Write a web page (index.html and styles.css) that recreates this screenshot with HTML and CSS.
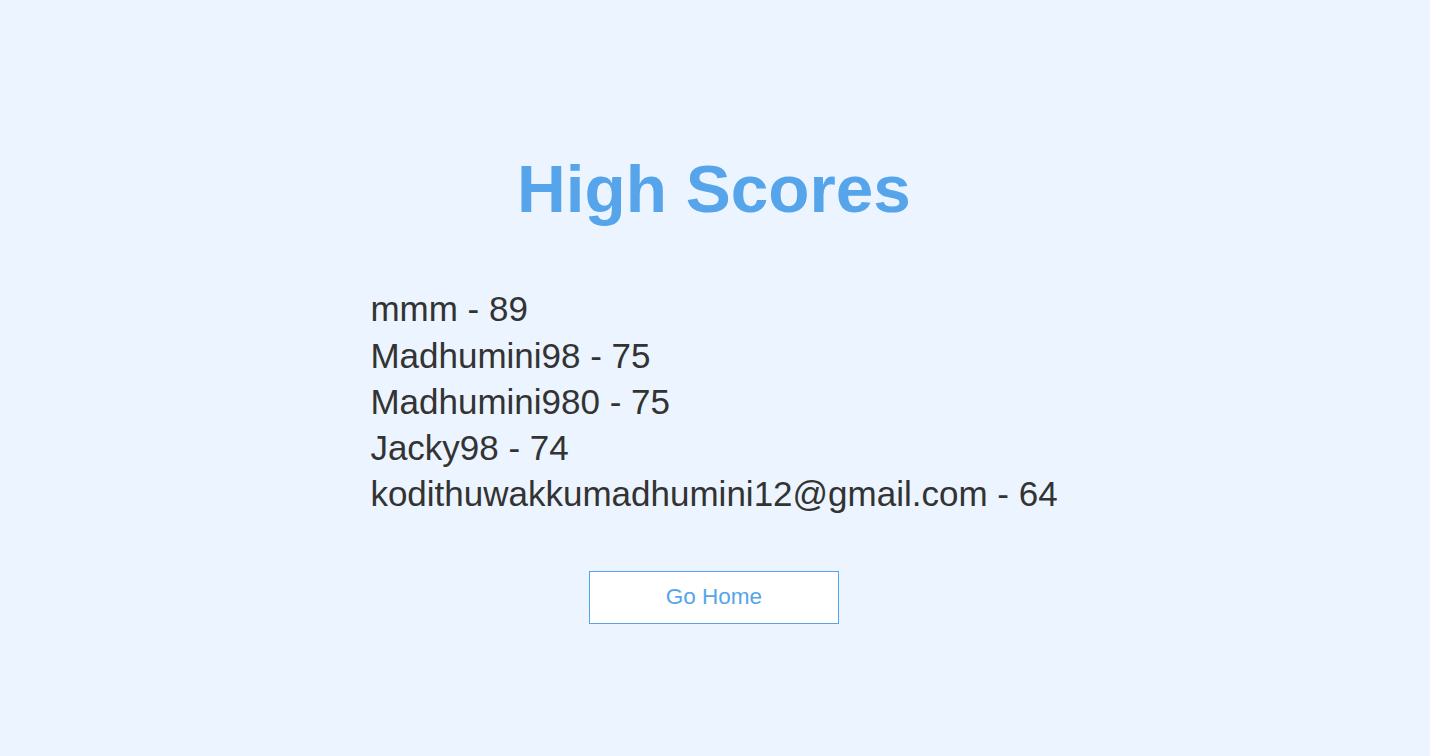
FILE: index.html
```html
<!DOCTYPE html>
<html lang="en">
<head>
<meta charset="UTF-8">
<title>High Scores</title>
<link rel="stylesheet" href="styles.css">
</head>
<body>
<div class="container">
  <div class="highscores">
    <h1 class="title">High Scores</h1>
    <ul class="score-list">
      <li class="high-score">mmm - 89</li>
      <li class="high-score">Madhumini98 - 75</li>
      <li class="high-score">Madhumini980 - 75</li>
      <li class="high-score">Jacky98 - 74</li>
      <li class="high-score">kodithuwakkumadhumini12@gmail.com - 64</li>
    </ul>
    <a class="btn" href="#">Go Home</a>
  </div>
</div>
</body>
</html>
```
FILE: styles.css
```css
* {
  box-sizing: border-box;
  margin: 0;
  padding: 0;
  font-family: "Liberation Sans", Arial, Helvetica, sans-serif;
  color: #333;
}
html, body {
  height: 100%;
}
body {
  background-color: #ecf5ff;
}
.container {
  width: 100%;
  height: 756px;
  max-width: 1000px;
  margin: 0 auto;
  padding: 30px 27px 0 25px;
  display: flex;
  flex-direction: column;
  justify-content: center;
  align-items: center;
}
.highscores {
  display: flex;
  flex-direction: column;
  align-items: center;
}
.title {
  font-size: 67.5px;
  font-weight: bold;
  color: #56a5eb;
  margin-bottom: 62.5px;
}
.score-list {
  list-style: none;
  margin-bottom: 50px;
}
.high-score {
  font-size: 35px;
  margin-bottom: 6.25px;
}
.btn {
  display: block;
  font-size: 22.5px;
  padding: 12.5px 0;
  width: 250px;
  text-align: center;
  border: 1px solid #56a5eb;
  margin-bottom: 12.5px;
  text-decoration: none;
  color: #56a5eb;
  background-color: #fff;
}
```
